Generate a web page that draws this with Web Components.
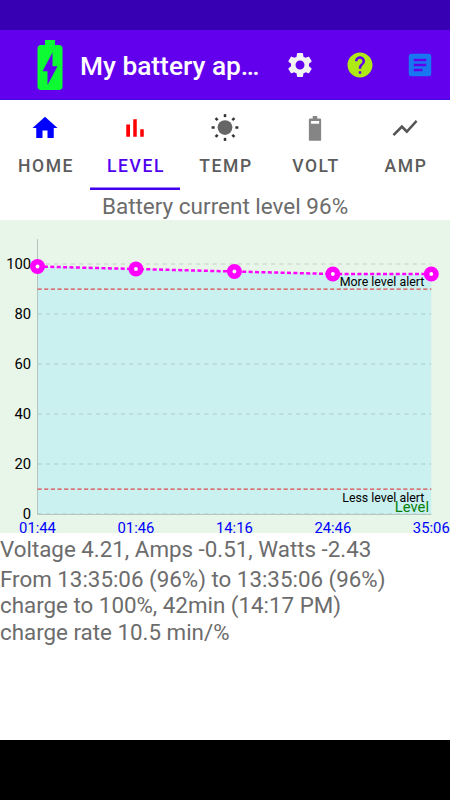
<!DOCTYPE html>
<html lang="en">
<head>
<meta charset="utf-8">
<title>My battery app</title>
<style>
  html, body { margin: 0; height: 100%; }
  body { background: #fff; font-family: Roboto, "Liberation Sans", sans-serif; overflow: hidden; }
</style>
</head>
<body>
<battery-app></battery-app>

<script>
/* ICONS */
const icons = {
  settings: '<path d="M19.14 12.94c.04-.3.06-.61.06-.94 0-.32-.02-.64-.07-.94l2.03-1.58c.18-.14.23-.41.12-.61l-1.92-3.32c-.12-.22-.37-.29-.59-.22l-2.39.96c-.5-.38-1.03-.7-1.62-.94l-.36-2.54c-.04-.24-.24-.41-.48-.41h-3.84c-.24 0-.43.17-.47.41l-.36 2.54c-.59.24-1.13.57-1.62.94l-2.39-.96c-.22-.08-.47 0-.59.22L2.74 8.87c-.12.21-.08.47.12.61l2.03 1.58c-.05.3-.09.63-.09.94s.02.64.07.94l-2.03 1.58c-.18.14-.23.41-.12.61l1.92 3.32c.12.22.37.29.59.22l2.39-.96c.5.38 1.03.7 1.62.94l.36 2.54c.05.24.24.41.48.41h3.84c.24 0 .44-.17.47-.41l.36-2.54c.59-.24 1.13-.56 1.62-.94l2.39.96c.22.08.47 0 .59-.22l1.92-3.32c.12-.22.07-.47-.12-.61l-2.01-1.58zM12 15.6c-1.98 0-3.6-1.62-3.6-3.6s1.62-3.6 3.6-3.6 3.6 1.62 3.6 3.6-1.62 3.6-3.6 3.6z"/>',
  help: '<path d="M12 2C6.48 2 2 6.48 2 12s4.48 10 10 10 10-4.48 10-10S17.52 2 12 2zm1 17h-2v-2h2v2zm2.07-7.75l-.9.92C13.45 12.9 13 13.5 13 15h-2v-.5c0-1.1.45-2.1 1.17-2.83l1.24-1.26c.37-.36.59-.86.59-1.41 0-1.1-.9-2-2-2s-2 .9-2 2H8c0-2.21 1.79-4 4-4s4 1.79 4 4c0 .88-.36 1.68-.93 2.25z"/>',
  article: '<path d="M19 3H5c-1.1 0-2 .9-2 2v14c0 1.1.9 2 2 2h14c1.1 0 2-.9 2-2V5c0-1.1-.9-2-2-2zm-5 14H7v-2h7v2zm3-4H7v-2h10v2zm0-4H7V7h10v2z"/>',
  charging: '<path d="M15.67 4H14V2h-4v2H8.33C7.6 4 7 4.6 7 5.33v15.33C7 21.4 7.6 22 8.33 22h7.33c.74 0 1.34-.6 1.34-1.33V5.33C17 4.6 16.4 4 15.67 4zM11 20v-5.5H9L13 7v5.5h2L11 20z"/>',
  home: '<path d="M10 20v-6h4v6h5v-8h3L12 3 2 12h3v8z"/>',
  bars: '<path d="M5 9.2h3V19H5zM10.6 5h2.8v14h-2.8zM16.2 13H19v6h-2.8z"/>',
  sun: '<circle cx="12" cy="11.6" r="5.9"/><g stroke="#333" stroke-width="2" fill="none">' +
    [0, 45, 90, 135, 180, 225, 270, 315].map(a =>
      `<path d="M12 3.3V.9" transform="rotate(${a} 12 11.6)"/>`).join('') + '</g>',
  battery: '<path d="M10.2 2.4h3.6v2h2.2q.9 0 .9.9v16.3q0 .5-.5.5H7.6q-.5 0-.5-.5V5.3q0-.9.9-.9h2.2zM8.7 6.3v2.2h6.6V6.3z" fill-rule="evenodd"/>',
  trend: '<path d="M3.5 18.49l6-6.01 4 4L22 6.92l-1.41-1.41-7.09 7.97-4-4L2 16.99z"/>'
};

class MdIcon extends HTMLElement {
  constructor() {
    super();
    this.attachShadow({ mode: "open" });
  }

  connectedCallback() {
    this.shadowRoot.innerHTML = `
      <style>
        :host { display: block; flex: none; width: 30px; height: 30px; }
        svg { display: block; width: 100%; height: 100%; fill: currentColor; overflow: visible; }
      </style>
      <svg viewBox="0 0 24 24">${icons[this.getAttribute("name")]}</svg>`;
  }
}
customElements.define("md-icon", MdIcon);

/* TOOLBAR */
class AppToolbar extends HTMLElement {
  constructor() {
    super();
    this.attachShadow({ mode: "open" }).innerHTML = `
      <style>
        :host { display: flex; flex: none; align-items: center; height: 70px; box-sizing: border-box; padding-left: 20px; background: #6200ee; box-shadow: inset 0 -1px #3d0fe0; color: #fff; }
        .logo { width: 60px; height: 60px; color: #0cfb33; }
        .title { flex: 1; min-width: 0; font-size: 26.3px; font-weight: 500; line-height: 30px; white-space: nowrap; padding-top: 2px; }
        .actions { display: flex; gap: 30px; padding-right: 15px; }
      </style>
      <md-icon class="logo" name="charging"></md-icon>
      <div class="title"><slot></slot></div>
      <div class="actions">
        <md-icon name="settings" style="color:#f2f2f2"></md-icon>
        <md-icon name="help" style="color:#aeea16"></md-icon>
        <md-icon name="article" style="color:#1877f0"></md-icon>
      </div>`;
  }
}
customElements.define("app-toolbar", AppToolbar);

/* TABS */
class TabItem extends HTMLElement {
  constructor() {
    super();
    this.attachShadow({ mode: "open" });
  }

  connectedCallback() {
    this.shadowRoot.innerHTML = `
      <style>
        :host { display: flex; flex-direction: column; align-items: center; flex: 1; height: 90px; box-sizing: border-box; padding-top: 13px; color: #5c5c5c; }
        :host([active]) { color: #5000ee; box-shadow: inset 0 -2.5px #4100ee; }
        span { font-size: 17.5px; font-weight: 500; letter-spacing: 1.6px; line-height: 21px; margin: 13px 0 0 2px; }
      </style>
      <md-icon name="${this.getAttribute("icon")}" style="color:${this.getAttribute("tint")}"></md-icon>
      <span><slot></slot></span>`;
  }
}
customElements.define("tab-item", TabItem);

class TabBar extends HTMLElement {
  constructor() {
    super();
    this.attachShadow({ mode: "open" }).innerHTML = `
      <style>
        :host { display: flex; flex: none; height: 90px; background: #fff; }
      </style>
      <slot></slot>`;
  }
}
customElements.define("tab-bar", TabBar);

/* LEVEL CHART */
const readings = [
  { time: "01:44", level: 99 },
  { time: "01:46", level: 98 },
  { time: "14:16", level: 97 },
  { time: "24:46", level: 96 },
  { time: "35:06", level: 96 }
];

class LevelChart extends HTMLElement {
  constructor() {
    super();
    this.attachShadow({ mode: "open" });
  }

  connectedCallback() {
    const left = 37.5, right = 431.3, bottom = 294;
    const px = i => left + i * (right - left) / (readings.length - 1);
    const py = v => bottom - v * 2.5;
    const line = readings.map((r, i) => `${px(i)},${py(r.level)}`).join(" ");

    const grid = [0, 20, 40, 60, 80, 100].map(v => `
      <path class="grid" d="M${left} ${py(v)}H${right}"/>
      <text class="axis" x="31.2" y="${py(v) + 4.5}" text-anchor="end">${v}</text>`).join("");
    const limits = [90, 10].map(v => `<path class="limit" d="M${left} ${py(v) + .2}H${right}"/>`).join("");
    const points = readings.map((r, i) => `
      <circle cx="${px(i)}" cy="${py(r.level)}" r="7.5" fill="#f0f"/>
      <circle cx="${px(i)}" cy="${py(r.level)}" r="1.9" fill="#fff"/>`).join("");
    const times = readings.map((r, i) =>
      `<text class="time" x="${px(i)}" y="312.5" text-anchor="middle">${r.time}</text>`).join("");

    this.shadowRoot.innerHTML = `
      <style>
        :host { display: block; height: 313px; background: #e8f5e9; }
        svg { display: block; width: 450px; height: 313px; overflow: visible; }
        .area { fill: #caf0ef; }
        .grid { stroke: #000; stroke-opacity: .1; stroke-width: 1.3; stroke-dasharray: 4.17 4.17; }
        .edge { stroke: #b5c4bd; stroke-width: 1; fill: none; }
        .limit { stroke: #dc4a4a; stroke-width: 1.25; stroke-dasharray: 4.2 2.45; }
        .line { fill: none; stroke: #f0f; stroke-width: 2.5; stroke-dasharray: 4 2.4; }
        .axis { font-size: 14.8px; }
        .time { font-size: 14.8px; fill: #00f; }
        .note { font-size: 12.4px; }
        .name { font-size: 14.8px; fill: #087f08; }
      </style>
      <svg viewBox="0 0 450 313">
        <polygon class="area" points="${left},${bottom} ${line} ${right},${bottom}"/>
        ${grid}
        <path class="edge" d="M${left} 19V${bottom + .5}H${right}"/>
        ${limits}
        <polyline class="line" points="${line}"/>
        ${points}
        <text class="note" x="424.3" y="65.7" text-anchor="end">More level alert</text>
        <text class="note" x="424.3" y="282.3" text-anchor="end">Less level alert</text>
        <text class="name" x="429" y="291.8" text-anchor="end">Level</text>
        ${times}
      </svg>`;
  }
}
customElements.define("level-chart", LevelChart);

/* INFO TEXT */
class InfoText extends HTMLElement {
  constructor() {
    super();
    this.attachShadow({ mode: "open" }).innerHTML = `
      <style>
        :host { display: block; font-size: 22.35px; line-height: 26.2px; color: #6c6c6c; white-space: nowrap; }
        :host([center]) { font-size: 22.5px; text-align: center; }
      </style>
      <slot></slot>`;
  }
}
customElements.define("info-text", InfoText);

/* SCREEN */
class BatteryApp extends HTMLElement {
  constructor() {
    super();
    this.attachShadow({ mode: "open" }).innerHTML = `
      <style>
        :host { display: flex; flex-direction: column; width: 450px; height: 800px; background: #fff; }
        .status { flex: none; height: 30px; background: #3700b3; }
        .content { flex: 1; min-height: 0; }
        .heading { height: 27px; padding-top: 3px; }
        .now { padding-top: 3px; }
        .period { padding-top: 4px; }
        .nav { flex: none; height: 60px; background: #000; }
      </style>
      <div class="status"></div>
      <app-toolbar>My battery ap…</app-toolbar>
      <tab-bar>
        <tab-item icon="home" tint="#0000ff">HOME</tab-item>
        <tab-item icon="bars" tint="#ff0000" active>LEVEL</tab-item>
        <tab-item icon="sun" tint="#666">TEMP</tab-item>
        <tab-item icon="battery" tint="#858585">VOLT</tab-item>
        <tab-item icon="trend" tint="#555">AMP</tab-item>
      </tab-bar>
      <div class="content">
        <info-text center class="heading">Battery current level 96%</info-text>
        <level-chart></level-chart>
        <info-text class="now">Voltage 4.21, Amps -0.51, Watts -2.43</info-text>
        <info-text class="period">From 13:35:06 (96%) to 13:35:06 (96%)<br>charge to 100%, 42min (14:17 PM)<br>charge rate 10.5 min/%</info-text>
      </div>
      <div class="nav"></div>`;
  }
}
customElements.define("battery-app", BatteryApp);
</script>
</body>
</html>
